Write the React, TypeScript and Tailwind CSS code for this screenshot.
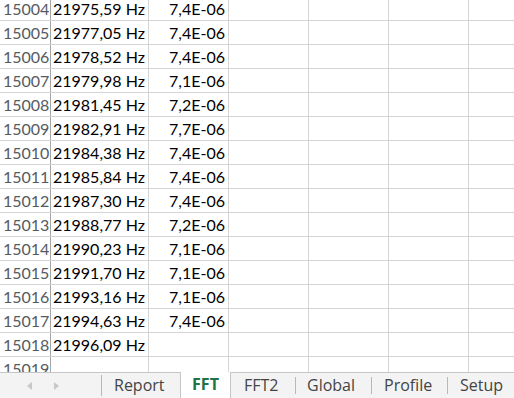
import React from "react";

const rows: [string, string, string][] = [
  ["15004", "21975,59 Hz", "7,4E-06"],
  ["15005", "21977,05 Hz", "7,4E-06"],
  ["15006", "21978,52 Hz", "7,4E-06"],
  ["15007", "21979,98 Hz", "7,1E-06"],
  ["15008", "21981,45 Hz", "7,2E-06"],
  ["15009", "21982,91 Hz", "7,7E-06"],
  ["15010", "21984,38 Hz", "7,4E-06"],
  ["15011", "21985,84 Hz", "7,4E-06"],
  ["15012", "21987,30 Hz", "7,4E-06"],
  ["15013", "21988,77 Hz", "7,2E-06"],
  ["15014", "21990,23 Hz", "7,1E-06"],
  ["15015", "21991,70 Hz", "7,1E-06"],
  ["15016", "21993,16 Hz", "7,1E-06"],
  ["15017", "21994,63 Hz", "7,4E-06"],
  ["15018", "21996,09 Hz", ""],
  ["15019", "", ""],
];

export default function App() {
  return (
    <div
      className="w-[514px] h-[398px] overflow-hidden bg-white flex flex-col"
      style={{ fontFamily: "Lato, 'Open Sans', sans-serif" }}
    >
      <div className="h-[372px] overflow-hidden">
        <div className="-mt-[3px]">
          {rows.map(([n, f, v]) => (
            <div key={n} className="flex h-[24px] border-b border-[#d4d4d4] text-[16px] leading-[23px]">
              <div className="w-[51px] shrink-0 border-r border-[#a6a6a6] pl-[3px] text-[#555a62]">{n}</div>
              <div className="w-[98px] shrink-0 border-r border-[#d4d4d4] pl-[2px] text-black">{f}</div>
              <div className="w-[80px] shrink-0 border-r border-[#d4d4d4] pr-[3px] text-right text-black">{v}</div>
              <div className="w-[80px] shrink-0 border-r border-[#d4d4d4]" />
              <div className="w-[80px] shrink-0 border-r border-[#d4d4d4]" />
              <div className="w-[80px] shrink-0 border-r border-[#d4d4d4]" />
              <div className="flex-1" />
            </div>
          ))}
        </div>
      </div>
      <div
        className="flex-1 flex bg-[#f3f3f3] border-t border-[#c6c6c6] text-[16px] text-[#444] leading-[24px]"
        style={{ fontFamily: "'Open Sans', sans-serif" }}
      >
        <div className="w-[102px] shrink-0 flex items-center border-r border-[#b8b8b8] my-[2px]">
          <svg width="8" height="10" viewBox="0 0 8 10" className="ml-[25px]">
            <path d="M7 1 L2 5 L7 9 Z" fill="#c8c8c8" />
          </svg>
          <svg width="8" height="10" viewBox="0 0 8 10" className="ml-[20px]">
            <path d="M1 1 L6 5 L1 9 Z" fill="#c8c8c8" />
          </svg>
        </div>
        <div className="w-[78px] shrink-0 pl-[12px] bg-[#f3f3f3]">Report</div>
        <div className="w-[51px] shrink-0 -mt-px bg-white border-x border-[#c6c6c6] text-center font-bold text-[#217346]">FFT</div>
        <div className="w-[64px] shrink-0 pl-[13px] flex">
          <span>FFT2</span>
        </div>
        <div className="w-[76px] shrink-0 flex">
          <span className="w-px my-[4px] bg-[#b8b8b8]" />
          <span className="pl-[11px]">Global</span>
        </div>
        <div className="w-[76px] shrink-0 flex">
          <span className="w-px my-[4px] bg-[#b8b8b8]" />
          <span className="pl-[12px]">Profile</span>
        </div>
        <div className="flex-1 flex">
          <span className="w-px my-[4px] bg-[#b8b8b8]" />
          <span className="pl-[12px]">Setup</span>
        </div>
      </div>
    </div>
  );
}
